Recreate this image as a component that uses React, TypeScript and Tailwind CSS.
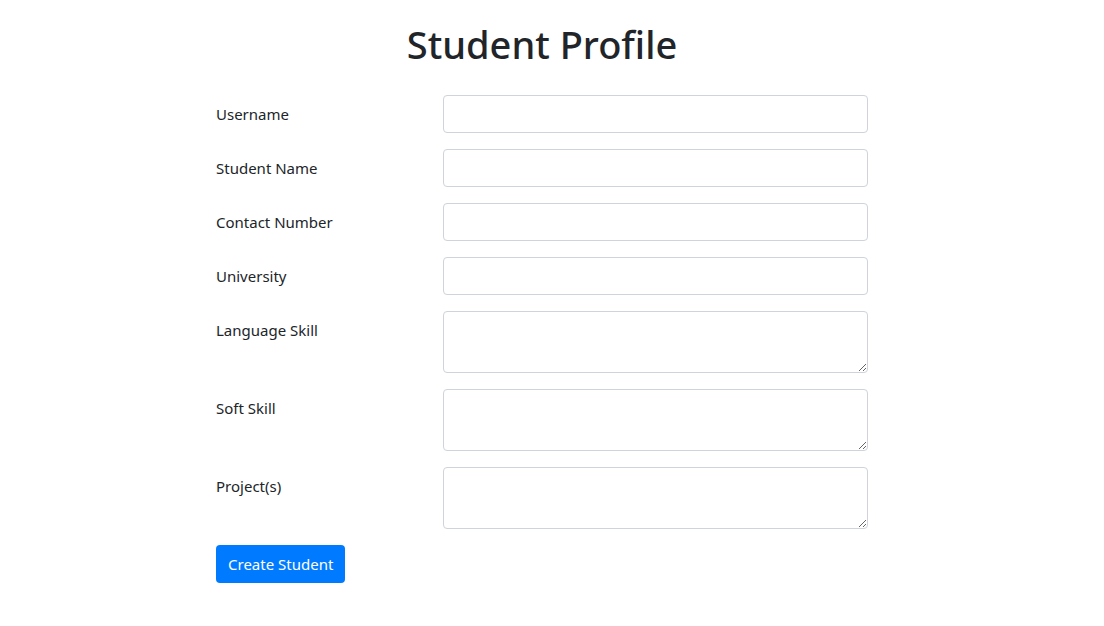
import React from "react";

const fields: { label: string; type: "input" | "textarea" }[] = [
  { label: "Username", type: "input" },
  { label: "Student Name", type: "input" },
  { label: "Contact Number", type: "input" },
  { label: "University", type: "input" },
  { label: "Language Skill", type: "textarea" },
  { label: "Soft Skill", type: "textarea" },
  { label: "Project(s)", type: "textarea" },
];

export default function App() {
  return (
    <div
      className="min-h-[626px] bg-white text-[#212529]"
      style={{ fontFamily: '"Noto Sans", "Open Sans", Arial, sans-serif' }}
    >
      <div className="ml-[201px] w-[682px] px-[15px]">
        <h1 className="pt-[20px] text-center text-[38px] font-medium leading-[48px]">
          Student Profile
        </h1>
        <form className="mt-[27px] flex flex-col">
          {fields.map((f) => (
            <div key={f.label} className="mb-[16px] flex">
              <label className="w-[212px] shrink-0 pt-[7px] text-[15px] leading-[24px]">
                {f.label}
              </label>
              <div className="ml-[15px] flex-1">
                {f.type === "input" ? (
                  <input
                    type="text"
                    className="block h-[38px] w-full rounded-[4px] border border-[#ced4da] bg-white px-[12px] text-[15px] outline-none"
                  />
                ) : (
                  <textarea
                    rows={2}
                    className="block h-[62px] w-full rounded-[4px] border border-[#ced4da] bg-white px-[12px] py-[6px] text-[15px] leading-[24px] outline-none"
                  />
                )}
              </div>
            </div>
          ))}
          <div>
            <button
              type="button"
              className="h-[38px] rounded-[4px] bg-[#007bff] px-[12px] text-[15px] leading-[24px] text-white"
            >
              Create Student
            </button>
          </div>
        </form>
      </div>
    </div>
  );
}
